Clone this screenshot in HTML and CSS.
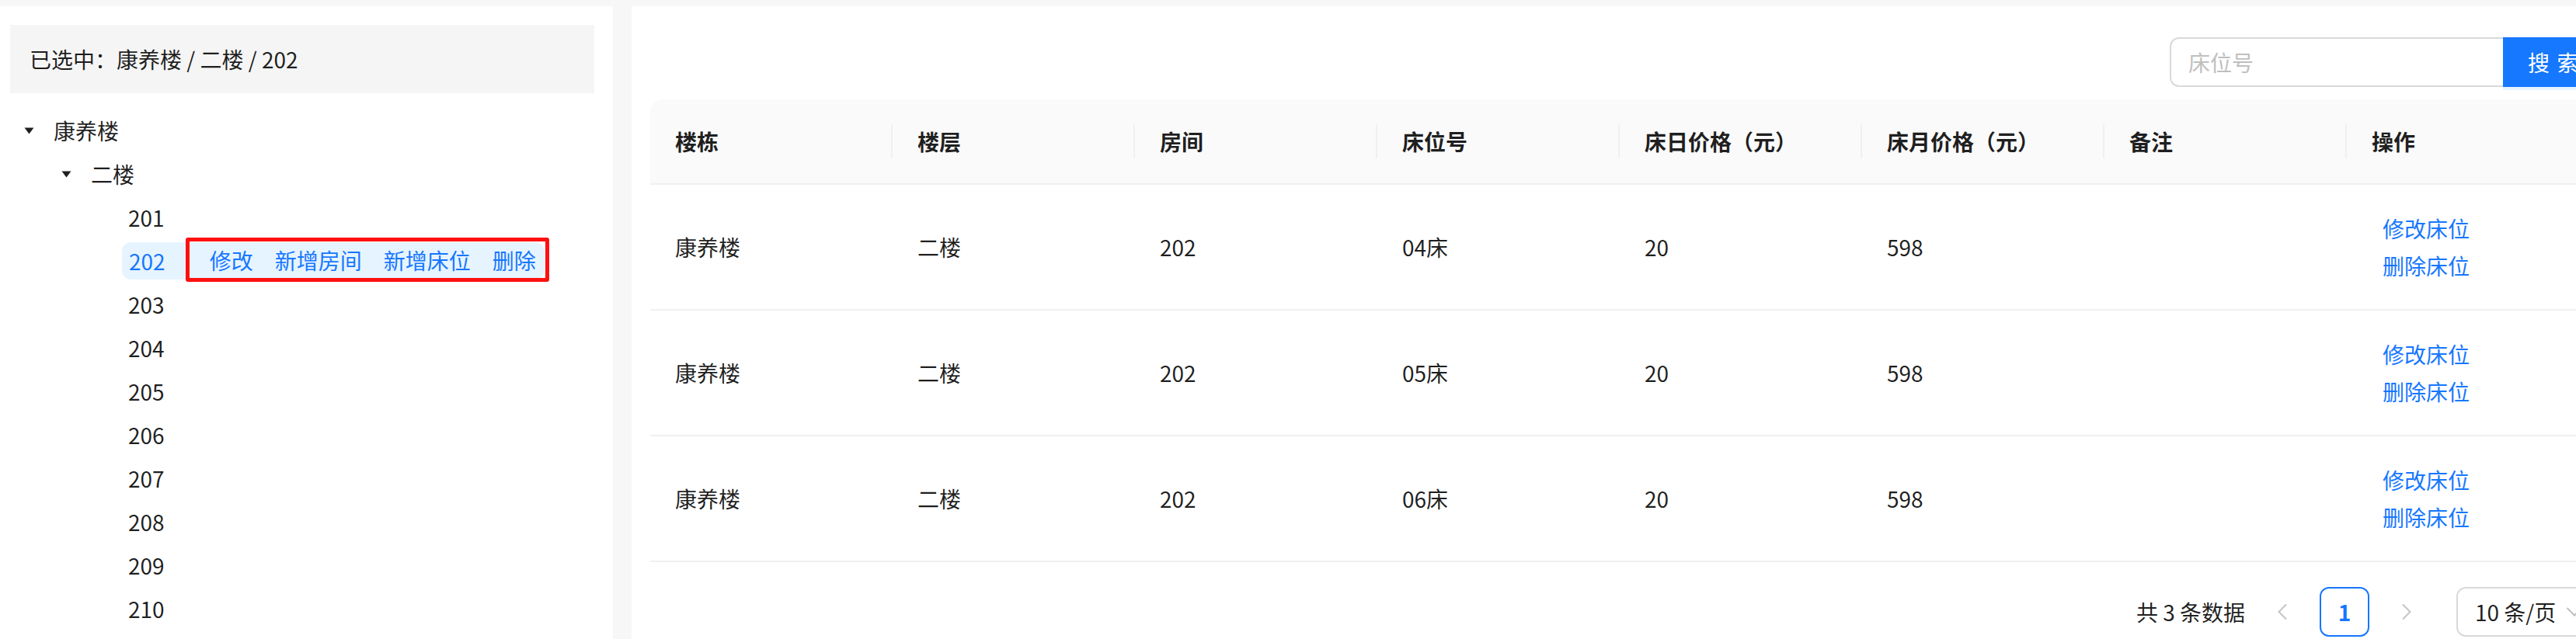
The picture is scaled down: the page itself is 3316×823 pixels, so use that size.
FILE: index.html
```html
<!DOCTYPE html>
<html lang="zh-CN">
<head>
<meta charset="utf-8">
<title>床位管理</title>
<link rel="stylesheet" href="styles.css">
</head>
<body>
<div class="page">
  <aside class="side">
    <div class="selected">已选中：康养楼 / 二楼 / 202</div>
    <ul class="tree">
      <li class="node lvl0">
        <span class="switcher"><svg width="13" height="9" viewBox="0 0 13 9"><path d="M0.5 0.5h12L6.5 8.5z" fill="currentColor"/></svg></span>
        <span class="content">康养楼</span>
      </li>
      <li class="node lvl1">
        <span class="switcher"><svg width="13" height="9" viewBox="0 0 13 9"><path d="M0.5 0.5h12L6.5 8.5z" fill="currentColor"/></svg></span>
        <span class="content">二楼</span>
      </li>
      <li class="node lvl2"><span class="switcher"></span><span class="content">201</span></li>
      <li class="node lvl2">
        <span class="switcher"></span>
        <span class="content selected-node">
          <span class="node-title">202</span>
          <span class="node-actions">
            <a class="node-act">修改</a>
            <a class="node-act">新增房间</a>
            <a class="node-act">新增床位</a>
            <a class="node-act">删除</a>
          </span>
        </span>
      </li>
      <li class="node lvl2"><span class="switcher"></span><span class="content">203</span></li>
      <li class="node lvl2"><span class="switcher"></span><span class="content">204</span></li>
      <li class="node lvl2"><span class="switcher"></span><span class="content">205</span></li>
      <li class="node lvl2"><span class="switcher"></span><span class="content">206</span></li>
      <li class="node lvl2"><span class="switcher"></span><span class="content">207</span></li>
      <li class="node lvl2"><span class="switcher"></span><span class="content">208</span></li>
      <li class="node lvl2"><span class="switcher"></span><span class="content">209</span></li>
      <li class="node lvl2"><span class="switcher"></span><span class="content">210</span></li>
    </ul>
  </aside>

  <main class="main">
    <div class="search-row">
      <div class="search">
        <input class="search-input" type="text" placeholder="床位号">
        <button class="search-btn"><span>搜索</span></button>
      </div>
    </div>

    <table class="table">
      <thead>
        <tr>
          <th>楼栋</th>
          <th>楼层</th>
          <th>房间</th>
          <th>床位号</th>
          <th>床日价格（元）</th>
          <th>床月价格（元）</th>
          <th>备注</th>
          <th>操作</th>
        </tr>
      </thead>
      <tbody>
        <tr>
          <td>康养楼</td><td>二楼</td><td>202</td><td>04床</td><td>20</td><td>598</td><td></td>
          <td><a class="link">修改床位</a><a class="link">删除床位</a></td>
        </tr>
        <tr>
          <td>康养楼</td><td>二楼</td><td>202</td><td>05床</td><td>20</td><td>598</td><td></td>
          <td><a class="link">修改床位</a><a class="link">删除床位</a></td>
        </tr>
        <tr>
          <td>康养楼</td><td>二楼</td><td>202</td><td>06床</td><td>20</td><td>598</td><td></td>
          <td><a class="link">修改床位</a><a class="link">删除床位</a></td>
        </tr>
      </tbody>
    </table>

    <div class="pagination">
      <span class="total">共 3 条数据</span>
      <span class="pg-item pg-arrow"><svg width="14" height="22" viewBox="0 0 14 22"><path d="M12 1.5L2.5 11L12 20.5" fill="none" stroke="currentColor" stroke-width="2"/></svg></span>
      <span class="pg-item pg-active">1</span>
      <span class="pg-item pg-arrow"><svg width="14" height="22" viewBox="0 0 14 22"><path d="M2 1.5L11.5 11L2 20.5" fill="none" stroke="currentColor" stroke-width="2"/></svg></span>
      <span class="size-changer">
        <span class="size-text">10 条/页</span>
        <svg class="size-arrow" width="22" height="14" viewBox="0 0 22 14"><path d="M1.5 2L11 11.5L20.5 2" fill="none" stroke="currentColor" stroke-width="2"/></svg>
      </span>
    </div>
  </main>
</div>
</body>
</html>
```

FILE: styles.css
```css
* { box-sizing: border-box; }

html, body {
  margin: 0;
  padding: 0;
  width: 3316px;
  height: 823px;
  overflow: hidden;
  background: #f7f7f7;
  font-family: "Noto Sans CJK SC", "Noto Sans", sans-serif;
  font-size: 28px;
  color: rgba(0, 0, 0, 0.88);
}

.page {
  display: flex;
  align-items: stretch;
  gap: 24px;
  padding-top: 8px;
  height: 823px;
  width: 3400px;
}

/* ---------- left panel ---------- */
.side {
  flex: 0 0 789px;
  background: #fff;
  padding: 24px 24px 0 13px;
}

.selected {
  height: 88px;
  background: #f5f5f5;
  display: flex;
  align-items: center;
  padding: 0 25px;
  line-height: 44px;
  white-space: nowrap;
}

.tree {
  list-style: none;
  margin: 24px 0 0;
  padding: 0;
}

.node {
  display: flex;
  align-items: center;
  height: 48px;
  margin-bottom: 8px;
  line-height: 48px;
  white-space: nowrap;
}

.lvl1 { padding-left: 48px; }
.lvl2 { padding-left: 96px; }

.switcher {
  flex: 0 0 48px;
  height: 48px;
  display: flex;
  align-items: center;
  justify-content: center;
  color: rgba(0, 0, 0, 0.88);
}

.content {
  display: flex;
  align-items: center;
  height: 48px;
  padding: 0 8px;
  border-radius: 12px;
}

.selected-node {
  background: #e6f4ff;
  color: #1677ff;
  padding: 0 0 0 9px;
}

.node-actions {
  display: flex;
  align-items: center;
  height: 57px;
  margin: -6px -6px -3px 26px;
  padding-left: 12px;
  border: 5px solid #ff1010;
  border-radius: 3px;
}

.node-act {
  padding: 0 14px;
  color: #1677ff;
  line-height: 44px;
}

.node-act:last-child { padding-right: 12px; }

/* ---------- right panel ---------- */
.main {
  flex: 0 0 2544px;
  background: #fff;
  padding: 40px 24px 0;
}

.search-row {
  display: flex;
  justify-content: flex-end;
  margin-bottom: 16px;
}

.search {
  display: flex;
  height: 64px;
}

.search-input {
  width: 429px;
  height: 64px;
  border: 2px solid #d9d9d9;
  border-right: 0;
  border-radius: 12px 0 0 12px;
  padding: 0 22px;
  font-family: inherit;
  font-size: 28px;
  color: rgba(0, 0, 0, 0.88);
  outline: none;
}

.search-input::placeholder { color: #bfbfbf; }

.search-btn {
  width: 111px;
  height: 64px;
  border: 2px solid #1677ff;
  background: #1677ff;
  color: #fff;
  border-radius: 0 12px 12px 0;
  padding: 0 0 0 30px;
  font-family: inherit;
  font-size: 28px;
  text-align: left;
  white-space: nowrap;
  box-shadow: 0 4px 0 rgba(5, 145, 255, 0.1);
}

.search-btn span { letter-spacing: 0.34em; }

.table {
  width: 2496px;
  table-layout: fixed;
  border-collapse: separate;
  border-spacing: 0;
}

.table th {
  position: relative;
  background: #fafafa;
  text-align: left;
  font-weight: 600;
  padding: 32px;
  line-height: 44px;
  border-bottom: 2px solid #f0f0f0;
  white-space: nowrap;
}

.table th:first-child { border-top-left-radius: 16px; }

.table th:not(:last-child)::before {
  content: "";
  position: absolute;
  right: 0;
  top: 50%;
  width: 2px;
  height: 44px;
  margin-top: -22px;
  background: #f0f0f0;
}

.table td {
  padding: 32px;
  line-height: 44px;
  border-bottom: 2px solid #f0f0f0;
  vertical-align: middle;
  white-space: nowrap;
}

.link {
  display: block;
  width: fit-content;
  height: 48px;
  line-height: 48px;
  padding: 0 14px;
  color: #1677ff;
}

.pagination {
  display: flex;
  justify-content: flex-end;
  align-items: center;
  margin: 32px -16px 0 0;
  height: 64px;
}

.total {
  margin-right: 16px;
  line-height: 64px;
}

.pg-item {
  min-width: 64px;
  height: 64px;
  margin-right: 16px;
  display: flex;
  align-items: center;
  justify-content: center;
  border-radius: 12px;
}

.pg-arrow { color: #c4c4c4; }

.pg-active {
  border: 2px solid #1677ff;
  color: #1677ff;
  font-weight: 600;
}

.size-changer {
  display: flex;
  align-items: center;
  width: 187px;
  height: 64px;
  margin-left: 16px;
  padding: 0 22px;
  border: 2px solid #d9d9d9;
  border-radius: 12px;
  white-space: nowrap;
}

.size-arrow {
  margin-left: auto;
  color: #bfbfbf;
  flex: 0 0 22px;
}
```
